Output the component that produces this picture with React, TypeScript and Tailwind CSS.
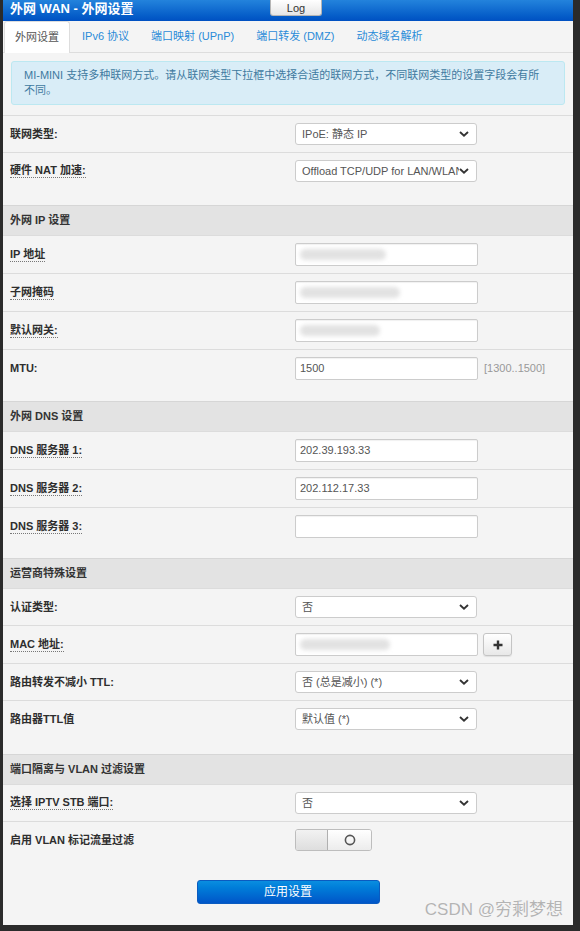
import React from 'react';

const font = "font-['Liberation_Sans','Noto_Sans_CJK_SC',sans-serif]";

const Chevron = () => (
  <svg width="10" height="6" viewBox="0 0 10 6" className="shrink-0">
    <path d="M1 1l4 3.6L9 1" fill="none" stroke="#333" strokeWidth="1.9" />
  </svg>
);

const Select = ({ value }: { value: string }) => (
  <div className="flex h-[22px] w-[182px] items-center rounded-[3px] border border-[#cccccc] bg-white pl-[6px] pr-[7px] text-[11px] text-[#555]">
    <span className="flex-1 overflow-hidden whitespace-nowrap pr-[4px]">{value}</span>
    <Chevron />
  </div>
);

const Input = ({ value, blur }: { value?: string; blur?: number }) => (
  <div className="flex h-[23px] w-[183px] items-center rounded-[2px] border border-[#cccccc] bg-white px-[4px] text-[11px] text-[#555] shadow-[inset_0_1px_1px_rgba(0,0,0,0.06)]">
    {value}
    {blur ? <div className="h-[11px] rounded-full bg-[#e2e2e2] blur-[2px]" style={{ width: blur }} /> : null}
  </div>
);

const Label = ({ text, dotted }: { text: string; dotted?: boolean }) => (
  <div className="flex w-[285px] shrink-0 items-center">
    <span className={`text-[11px] font-bold leading-[13px] text-[#2e2e2e] ${dotted ? 'border-b border-dotted border-[#777]' : ''}`}>{text}</span>
  </div>
);

const Row = ({ label, dotted, pb, children }: { label: string; dotted?: boolean; pb?: string; children: React.ReactNode }) => (
  <div className={`flex border-t border-[#dcdcdc] pl-[7px] pt-[7px] ${pb ? pb : 'pb-[7px]'}`}>
    <Label text={label} dotted={dotted} />
    <div className="flex items-center gap-[5px]">{children}</div>
  </div>
);

const Section = ({ title }: { title: string }) => (
  <div className="flex h-[30px] items-center border-t border-[#d6d6d6] bg-[#e3e3e3] pl-[7px] text-[11px] font-bold text-[#333]">{title}</div>
);

const tabs = ['外网设置', 'IPv6 协议', '端口映射 (UPnP)', '端口转发 (DMZ)', '动态域名解析'];

export default function App() {
  return (
    <div className={`h-[931px] w-[580px] bg-[#2b2b2b] ${font}`}>
      <div className="relative ml-[3px] h-[925px] w-[570px] bg-[#f4f4f4]">
        <div className="relative h-[21px] bg-gradient-to-b from-[#2383dc] to-[#0050c2] pl-[7px] text-[13px] font-bold leading-[18px] text-white">
          外网 WAN - 外网设置
          <div className="absolute left-[267px] top-0 flex h-[16px] w-[52px] items-center justify-center rounded-b-[3px] border border-t-0 border-[#b5b5b5] bg-gradient-to-b from-white to-[#e6e6e6] text-[11px] font-normal text-[#333]">
            Log
          </div>
        </div>

        <div className="flex h-[32px] items-end border-b border-[#dddddd] pl-[1px]">
          {tabs.map((t, i) => (
            <div
              key={t}
              className={`mr-[2px] flex h-[31px] items-center rounded-t-[3px] px-[10px] text-[11px] ${
                i === 0 ? '-mb-px h-[32px] border border-b-0 border-[#dddddd] bg-white text-[#555]' : 'text-[#2a8bd8]'
              }`}
            >
              {t}
            </div>
          ))}
        </div>

        <div className="mx-[8px] mt-[8px] rounded-[3px] border border-[#bce8f1] bg-[#d9edf7] px-[12px] py-[6px] text-[11px] leading-[15px] text-[#3f7aa0]">
          MI-MINI 支持多种联网方式。请从联网类型下拉框中选择合适的联网方式，不同联网类型的设置字段会有所
          <br />
          不同。
        </div>

        <div className="mt-[10px]">
          <Row label="联网类型:">
            <Select value="IPoE: 静态 IP" />
          </Row>
          <Row label="硬件 NAT 加速:" dotted pb="pb-[23px]">
            <Select value="Offload TCP/UDP for LAN/WLAN" />
          </Row>

          <Section title="外网 IP 设置" />
          <Row label="IP 地址" dotted>
            <Input blur={86} />
          </Row>
          <Row label="子网掩码" dotted>
            <Input blur={100} />
          </Row>
          <Row label="默认网关:" dotted>
            <Input blur={80} />
          </Row>
          <Row label="MTU:" pb="pb-[21px]">
            <Input value="1500" />
            <span className="ml-[1px] text-[11px] text-[#999]">[1300..1500]</span>
          </Row>

          <Section title="外网 DNS 设置" />
          <Row label="DNS 服务器 1:" dotted>
            <Input value="202.39.193.33" />
          </Row>
          <Row label="DNS 服务器 2:" dotted>
            <Input value="202.112.17.33" />
          </Row>
          <Row label="DNS 服务器 3:" dotted pb="pb-[20px]">
            <Input />
          </Row>

          <Section title="运营商特殊设置" />
          <Row label="认证类型:">
            <Select value="否" />
          </Row>
          <Row label="MAC 地址:" dotted>
            <Input blur={90} />
            <div className="flex h-[23px] w-[29px] items-center justify-center rounded-[3px] border border-[#c4c4c4] bg-gradient-to-b from-white to-[#e8e8e8] shadow-[0_1px_1px_rgba(0,0,0,0.08)]">
              <svg width="10" height="10" viewBox="0 0 10 10">
                <path d="M5 0.5v9M0.5 5h9" stroke="#333" strokeWidth="2.4" />
              </svg>
            </div>
          </Row>
          <Row label="路由转发不减小 TTL:">
            <Select value="否 (总是减小) (*)" />
          </Row>
          <Row label="路由器TTL值" pb="pb-[24px]">
            <Select value="默认值 (*)" />
          </Row>

          <Section title="端口隔离与 VLAN 过滤设置" />
          <Row label="选择 IPTV STB 端口:" dotted>
            <Select value="否" />
          </Row>
          <div className="flex border-t border-[#dcdcdc] pl-[7px] pt-[7px]">
            <Label text="启用 VLAN 标记流量过滤" />
            <div className="flex h-[22px] w-[77px] overflow-hidden rounded-[3px] border border-[#bdbdbd]">
              <div className="w-[32px] border-r border-[#b0b0b0] bg-gradient-to-b from-[#f2f2f2] to-[#dedede]" />
              <div className="flex flex-1 items-center justify-center bg-gradient-to-b from-white to-[#ececec]">
                <svg width="12" height="12" viewBox="0 0 12 12">
                  <circle cx="6" cy="6" r="4.6" fill="none" stroke="#555" strokeWidth="1.6" />
                </svg>
              </div>
            </div>
          </div>
        </div>

        <div className="mt-[29px] flex justify-center">
          <div className="flex h-[24px] w-[183px] items-center justify-center rounded-[3px] border border-[#0a5bc0] bg-gradient-to-b from-[#0a8ee0] to-[#0055c8] text-[12px] text-white">
            应用设置
          </div>
        </div>

        <div className="absolute bottom-[3px] right-[10px] text-[17px] text-[#b4b4b4] [text-shadow:0_0_1px_#ffffff]">
          CSDN @穷剩梦想
        </div>
      </div>
    </div>
  );
}
